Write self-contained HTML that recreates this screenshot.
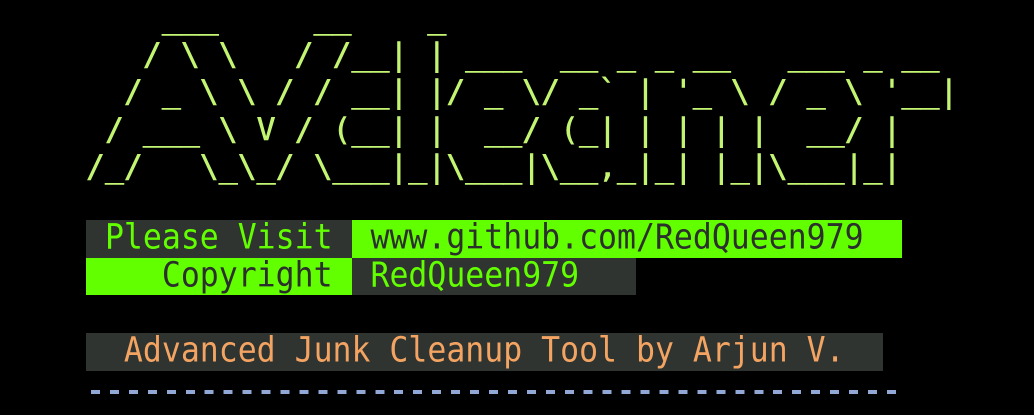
<!DOCTYPE html>
<html><head><meta charset="utf-8"><style>
html,body{margin:0;padding:0;background:#000;width:1034px;height:415px;overflow:hidden}
pre{margin:0;position:absolute;font-family:"DejaVu Sans Mono","Liberation Mono",monospace;font-size:31.5px;line-height:37.2px;white-space:pre}
#art{left:86px;top:0px;color:#c3f572;-webkit-text-stroke:0.6px #c3f572}
.row{position:absolute;left:86px;height:37.5px;font-family:"DejaVu Sans Mono","Liberation Mono",monospace;font-size:31.5px;line-height:37.5px;white-space:pre}
.row span{display:inline-block;height:37.5px}
.row span i{font-style:normal;display:inline-block;transform:scaleY(1.1);transform-origin:50% 62%}
.d{background:#2f3431}
.l{background:#62ff00;color:#2b302c}
.dg{color:#62ff00}
.o{color:#f4a462}
#dash{position:absolute;left:86px;top:390px;width:814px;height:4px;background:repeating-linear-gradient(90deg,transparent 0,transparent 5px,#91a7d6 5px,#91a7d6 14px,transparent 14px,transparent 18.95px)}
</style></head><body>
<pre id="art">    ___     __    _
   / \ \   / /__| | ___  __ _ _ __   ___ _ __
  / _ \ \ / / __| |/ _ \/ _` | '_ \ / _ \ '__|
 / ___ \ V / (__| |  __/ (_| | | | |  __/ |
/_/   \_\_/ \___|_|\___|\__,_|_| |_|\___|_|</pre>
<div class="row" style="top:220px"><span class="d dg"><i> Please Visit </i></span><span class="l"><i> www.github.com/RedQueen979  </i></span></div>
<div class="row" style="top:257.5px"><span class="l"><i>    Copyright </i></span><span class="d dg"><i> RedQueen979   </i></span></div>
<div class="row" style="top:333px"><span class="d o"><i>  Advanced Junk Cleanup Tool by Arjun V.  </i></span></div>
<div id="dash"></div>
</body></html>
